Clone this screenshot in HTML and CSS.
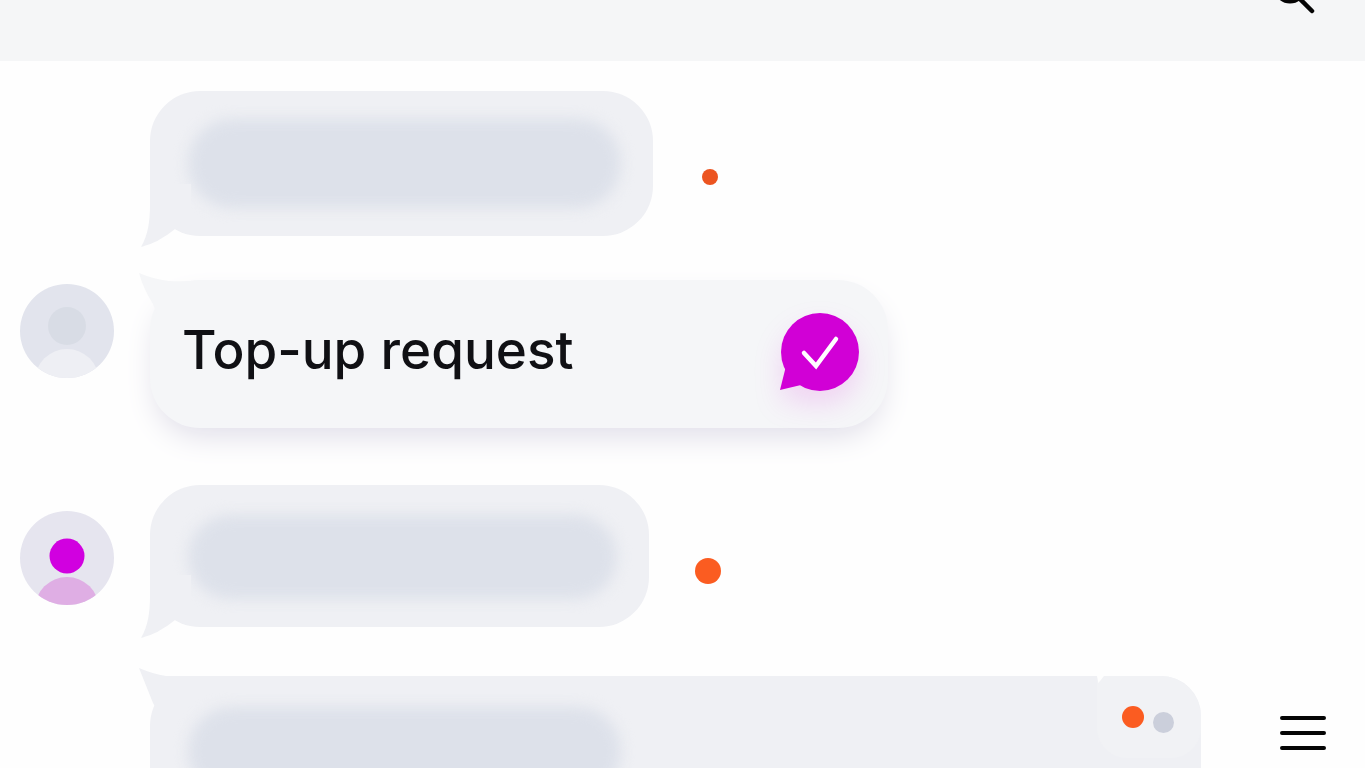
FILE: index.html
```html
<!DOCTYPE html>
<html lang="en">
<head>
  <meta charset="UTF-8">
  <meta name="viewport" content="width=device-width, initial-scale=1">
  <title>Messages</title>
  <link rel="stylesheet" href="styles.css">
</head>
<body>
  <header class="topbar">
    <button class="icon-btn search-btn" type="button" aria-label="Search">
      <svg width="48" height="48" viewBox="0 0 48 48" fill="none" stroke="#050505" stroke-linecap="round">
        <circle cx="22" cy="20" r="14" stroke-width="5"/>
        <path d="M31 31 L44 44" stroke-width="4.5"/>
      </svg>
    </button>
  </header>

  <main class="chat">
    <div class="row">
      <div class="bubble bubble-short">
        <div class="skeleton"></div>
        <svg class="tail tail-bottom" width="50" height="64" viewBox="0 0 50 64"><path d="M9 0 V20 C9 38 7 51 0 63 Q17 59 34 45 L50 26 V0 Z"/></svg>
      </div>
      <span class="dot dot-small"></span>
    </div>

    <div class="row row-request">
      <svg class="avatar" width="94" height="94" viewBox="0 0 94 94">
        <clipPath id="face1"><circle cx="47" cy="47" r="47"/></clipPath>
        <g clip-path="url(#face1)">
          <rect width="94" height="94" fill="#e2e4ed"/>
          <circle cx="47" cy="42" r="19" fill="#d8dce5"/>
          <circle cx="47" cy="97" r="32" fill="#eeeff4"/>
        </g>
      </svg>
      <div class="bubble bubble-request">
        <svg class="tail tail-top" width="62" height="42" viewBox="0 0 62 42"><path d="M0 1 Q14 7 30 9 Q45 10 62 8 V42 H18 L14 32 Q4 16 0 1 Z"/></svg>
        <p class="request-text">Top-up request</p>
        <svg class="badge" width="80" height="80" viewBox="0 0 80 80">
          <circle cx="41" cy="40" r="39" fill="#d100d6"/>
          <path d="M7 54 L1 78 L22 73 Z" fill="#d100d6"/>
          <path d="M25 41 L37 54 L57 27" fill="none" stroke="#fff" stroke-width="4.5" stroke-linecap="round"/>
        </svg>
      </div>
    </div>

    <div class="row row-contact">
      <svg class="avatar" width="94" height="94" viewBox="0 0 94 94">
        <clipPath id="face2"><circle cx="47" cy="47" r="47"/></clipPath>
        <g clip-path="url(#face2)">
          <rect width="94" height="94" fill="#e6e5ef"/>
          <circle cx="47" cy="45" r="17.5" fill="#d100e0"/>
          <circle cx="47" cy="98" r="32" fill="#dfaee4"/>
        </g>
      </svg>
      <div class="bubble bubble-short">
        <div class="skeleton"></div>
        <svg class="tail tail-bottom" width="50" height="64" viewBox="0 0 50 64"><path d="M9 0 V20 C9 38 7 51 0 63 Q17 59 34 45 L50 26 V0 Z"/></svg>
      </div>
      <span class="dot dot-large"></span>
    </div>

    <div class="row row-last">
      <div class="bubble bubble-wide">
        <svg class="tail tail-top" width="62" height="42" viewBox="0 0 62 42"><path d="M0 0 Q14 6 27 8 H62 V42 H18 L14 35 Z"/></svg>
        <div class="skeleton"></div>
        <div class="status">
          <span class="dot dot-medium"></span>
          <span class="dot dot-muted"></span>
        </div>
      </div>
    </div>
  </main>

  <button class="icon-btn menu-btn" type="button" aria-label="Menu">
    <svg width="48" height="36" viewBox="0 0 48 36" fill="none" stroke="#050505" stroke-width="4" stroke-linecap="round">
      <path d="M3 3 H45 M3 18 H45 M3 33 H45"/>
    </svg>
  </button>
</body>
</html>
```
FILE: styles.css
```css
* {
  box-sizing: border-box;
}
body {
  margin: 0;
  height: 100vh;
  overflow: hidden;
  background: #fefefe;
  color: #101014;
  font-family: Inter, "Liberation Sans", sans-serif;
}
.icon-btn {
  padding: 0;
  border: 0;
  background: none;
  cursor: pointer;
}
.icon-btn svg {
  display: block;
}
.menu-btn {
  position: fixed;
  right: 38px;
  bottom: 17px;
}

/* top bar, the search button runs off its upper edge */
.topbar {
  display: flex;
  justify-content: flex-end;
  align-items: flex-start;
  height: 61px;
  padding-right: 49px;
  background: #f5f6f7;
}
.search-btn {
  margin-top: -33px;
}

/* message rows */
.chat {
  padding: 30px 0 0 20px;
}
.row {
  display: grid;
  grid-template-columns: 94px auto 1fr;
  column-gap: 36px;
  align-items: center;
}
.row-request {
  margin-top: 44px;
}
.row-contact {
  margin-top: 57px;
}
.row-last {
  margin-top: 49px;
}
.avatar {
  grid-column: 1;
}
.row-request .avatar {
  margin-bottom: 46px;
}
.row-contact .avatar {
  margin-top: 4px;
}

.bubble {
  grid-column: 2;
  position: relative;
  border-radius: 50px;
  background: #eff0f4;
}
.bubble-short {
  padding: 28px 32px 28px 38px;
}
.row-contact .bubble-short {
  padding-top: 30px;
}
.bubble-request {
  display: flex;
  justify-content: space-between;
  align-items: center;
  width: 738px;
  max-width: 100%;
  height: 148px;
  padding: 0 29px 4px 32px;
  background: #f5f6f8;
  box-shadow: 0 14px 32px -8px #dcdae6;
}
.bubble-wide {
  grid-column: 2 / 4;
  display: flex;
  justify-content: space-between;
  align-items: flex-start;
  height: 148px;
  margin-right: 164px;
  padding-left: 38px;
  border-top-right-radius: 40px;
}

/* tails */
.tail {
  position: absolute;
  fill: #eff0f4;
}
.tail-bottom {
  left: -9px;
  bottom: -12px;
}
.tail-top {
  left: -11px;
  top: -8px;
}
.bubble-request .tail {
  fill: #f5f6f8;
}

.skeleton {
  width: 433px;
  height: 89px;
  border-radius: 44px;
  background: #dde1ea;
  filter: blur(7px);
}
.row-contact .skeleton {
  width: 429px;
  height: 84px;
}
.bubble-wide .skeleton {
  margin-top: 31px;
}

.request-text {
  margin: 0 0 5px;
  font-size: 53px;
  font-weight: 500;
  line-height: 64px;
}
.badge {
  filter: drop-shadow(0 14px 14px rgba(209, 0, 214, 0.14));
}

/* status dots */
.dot {
  display: block;
  border-radius: 50%;
  background: #fb5c21;
}
.dot-small {
  width: 16px;
  height: 16px;
  margin: 26px 0 0 13px;
  background: #ec5420;
}
.dot-large {
  width: 26px;
  height: 26px;
  margin: 30px 0 0 10px;
}
.dot-medium {
  width: 22px;
  height: 22px;
}
.dot-muted {
  width: 21px;
  height: 21px;
  margin-top: 10px;
  background: #cbcfdb;
}
.status {
  position: relative;
  display: flex;
  align-items: center;
  justify-content: center;
  gap: 9px;
  width: 104px;
  height: 82px;
  padding-right: 2px;
  border-radius: 0 40px 30px 30px;
  background: #f1f2f5;
}
/* small gap where the status panel meets the bubble */
.status::before {
  content: "";
  position: absolute;
  left: 0;
  top: 0;
  width: 7px;
  height: 7px;
  background: #fefefe;
  clip-path: polygon(0 0, 100% 0, 20% 100%);
}
```
